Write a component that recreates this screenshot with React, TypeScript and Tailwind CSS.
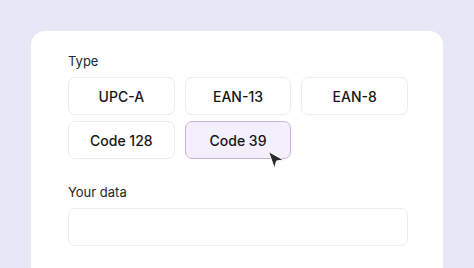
const types = ["UPC-A", "EAN-13", "EAN-8", "Code 128", "Code 39"];

export default function App() {
  const selected = "Code 39";
  return (
    <div
      className="h-screen w-full overflow-hidden bg-[#e7e8f6] pt-[31px] px-[31px]"
      style={{ fontFamily: "Inter, 'Noto Sans', sans-serif" }}
    >
      <div className="h-[260px] rounded-[14px] bg-white px-[37px] pt-[22px]">
        <div className="text-[13px] leading-[16px] text-[#262626]">Type</div>
        <div className="mt-[8px] grid w-[340px] grid-cols-3 gap-x-[10px] gap-y-[6px]">
          {types.map((t) => {
            const active = t === selected;
            return (
              <div
                key={t}
                className={`relative flex h-[38px] items-center justify-center rounded-[7px] border text-[14px] font-medium text-[#161616] ${
                  active
                    ? "border-[#c8b4e4] bg-[#f4effd]"
                    : "border-[#ececef] bg-white"
                }`}
              >
                {t}
                {active && (
                  <svg
                    className="absolute left-[80px] top-[27px] z-10 h-[22px] w-[20px]"
                    viewBox="0 0 20 22"
                  >
                    <path
                      d="M2.5 2.5 L17.5 11 L10.5 12 L8.5 19.5 Z"
                      fill="#2b2b2b"
                      stroke="#ffffff"
                      strokeWidth="1"
                      strokeLinejoin="round"
                    />
                  </svg>
                )}
              </div>
            );
          })}
        </div>
        <div className="mt-[25px] text-[13px] leading-[16px] text-[#262626]">
          Your data
        </div>
        <div className="mt-[8px] h-[38px] w-[340px] rounded-[7px] border border-[#ececef] bg-white" />
      </div>
    </div>
  );
}
